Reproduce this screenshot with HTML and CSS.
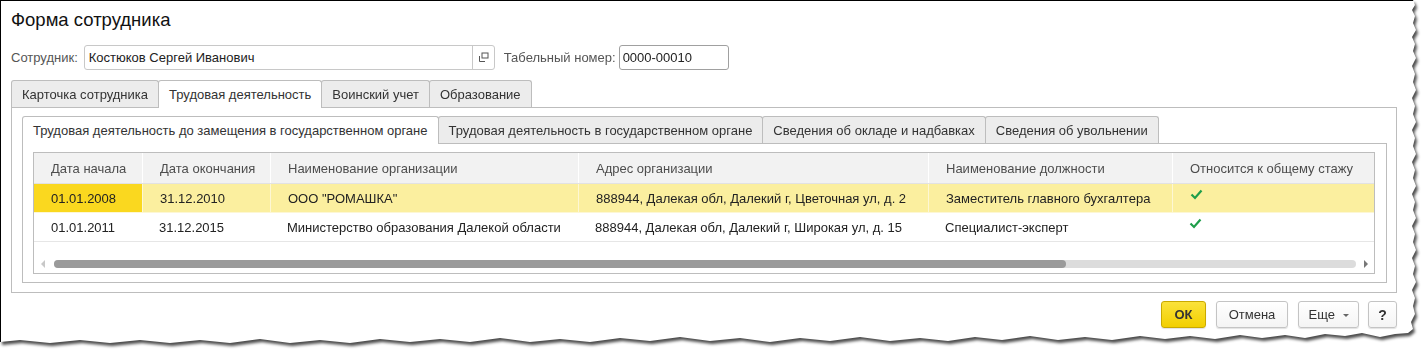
FILE: index.html
```html
<!DOCTYPE html>
<html lang="ru">
  <head>
    <meta charset="UTF-8" />
    <title>Форма сотрудника</title>
    <link rel="stylesheet" href="styles.css">
  </head>
  <body>
    <div class="sheet">
      <div class="paper">
        <h1 class="title">Форма сотрудника</h1>

        <div class="head-row">
          <span class="field-label">Сотрудник:</span>
          <div class="input input-employee">
            <span class="input-text">Костюков Сергей Иванович</span>
            <span class="input-btn">
              <svg width="11" height="11" viewBox="0 0 11 11">
                <rect x="4" y="1" width="6" height="5" fill="none" stroke="#555" stroke-width="1" />
                <path d="M1.5 4 V9.5 H7" fill="none" stroke="#555" stroke-width="1" />
              </svg>
            </span>
          </div>
          <span class="field-label label-number">Табельный номер:</span>
          <div class="input input-number">0000-00010</div>
        </div>

        <div class="form">
          <div class="tabs">
            <div class="tab">Карточка сотрудника</div>
            <div class="tab active">Трудовая деятельность</div>
            <div class="tab">Воинский учет</div>
            <div class="tab">Образование</div>
          </div>

          <div class="panel">
            <div class="tabs">
              <div class="tab active">Трудовая деятельность до замещения в государственном органе</div>
              <div class="tab">Трудовая деятельность в государственном органе</div>
              <div class="tab">Сведения об окладе и надбавках</div>
              <div class="tab">Сведения об увольнении</div>
            </div>

            <div class="subpanel">
              <div class="grid">
                <div class="grid-row grid-head">
                  <div class="cell">Дата начала</div>
                  <div class="cell">Дата окончания</div>
                  <div class="cell">Наименование организации</div>
                  <div class="cell">Адрес организации</div>
                  <div class="cell">Наименование должности</div>
                  <div class="cell">Относится к общему стажу</div>
                </div>

                <div class="grid-row selected">
                  <div class="cell current">01.01.2008</div>
                  <div class="cell">31.12.2010</div>
                  <div class="cell">ООО "РОМАШКА"</div>
                  <div class="cell">888944, Далекая обл, Далекий г, Цветочная ул, д. 2</div>
                  <div class="cell">Заместитель главного бухгалтера</div>
                  <div class="cell check-cell">
                    <svg width="13" height="11" viewBox="0 0 13 11">
                      <path d="M1.5 5.5 L5 9 L11.5 1.5" fill="none" stroke="#1e9e4a" stroke-width="2.2" />
                    </svg>
                  </div>
                </div>

                <div class="grid-row">
                  <div class="cell">01.01.2011</div>
                  <div class="cell">31.12.2015</div>
                  <div class="cell">Министерство образования Далекой области</div>
                  <div class="cell">888944, Далекая обл, Далекий г, Широкая ул, д. 15</div>
                  <div class="cell">Специалист-эксперт</div>
                  <div class="cell check-cell">
                    <svg width="13" height="11" viewBox="0 0 13 11">
                      <path d="M1.5 5.5 L5 9 L11.5 1.5" fill="none" stroke="#1e9e4a" stroke-width="2.2" />
                    </svg>
                  </div>
                </div>

                <div class="hscroll">
                  <span class="arrow arrow-left"></span>
                  <div class="track"><div class="thumb"></div></div>
                  <span class="arrow arrow-right"></span>
                </div>
              </div>
            </div>
          </div>

          <div class="buttons">
            <button class="btn btn-ok">ОК</button>
            <button class="btn btn-cancel">Отмена</button>
            <button class="btn btn-more">Еще <span class="caret"></span></button>
            <button class="btn btn-help">?</button>
          </div>
        </div>
      </div>
    </div>
  </body>
</html>
```

FILE: styles.css
```css
body {
  margin: 0;
  background: #fff;
  font-family: 'Liberation Sans', Arial, sans-serif;
  font-size: 13px;
  color: #333;
}

.sheet {
  width: 1423px;
  height: 353px;
  filter: drop-shadow(2px 3px 1.5px rgba(0, 0, 0, 0.7));
}

.paper {
  box-sizing: border-box;
  width: 1418px;
  height: 346px;
  background: #fff;
  border-top: 1px solid #000;
  border-left: 1px solid #000;
  padding: 8px 0 0 10px;
  clip-path: polygon(
    0 0, 1413px 0, 1415px 5px, 1412px 10px, 1415px 16px, 1413px 23px,
    1416px 30px, 1412px 37px, 1415px 44px, 1413px 51px, 1416px 58px,
    1412px 66px, 1415px 74px, 1413px 82px, 1416px 90px, 1412px 98px,
    1415px 106px, 1413px 114px, 1416px 122px, 1412px 130px, 1415px 138px,
    1413px 146px, 1416px 154px, 1412px 162px, 1415px 170px, 1413px 178px,
    1416px 186px, 1412px 194px, 1415px 202px, 1413px 210px, 1416px 218px,
    1412px 226px, 1415px 234px, 1413px 242px, 1416px 250px, 1412px 258px,
    1415px 266px, 1413px 274px, 1416px 282px, 1412px 290px, 1415px 298px,
    1413px 306px, 1415px 314px, 1411px 322px, 1413px 329px, 1408px 333px,
    1395px 334px, 1380px 337px, 1362px 333px, 1345px 336px, 1325px 334px,
    1305px 338px, 1285px 335px, 1262px 338px, 1240px 335px, 1215px 339px,
    1190px 336px, 1165px 339px, 1140px 336px, 1112px 340px, 1085px 337px,
    1058px 340px, 1030px 336px, 1002px 340px, 975px 337px, 948px 341px,
    920px 338px, 890px 341px, 860px 337px, 830px 341px, 800px 338px,
    770px 342px, 740px 338px, 710px 341px, 680px 337px, 650px 341px,
    620px 338px, 590px 342px, 560px 339px, 530px 342px, 500px 338px,
    470px 342px, 440px 339px, 410px 342px, 380px 339px, 350px 343px,
    320px 340px, 290px 343px, 260px 339px, 230px 343px, 200px 340px,
    170px 343px, 140px 340px, 110px 343px, 80px 340px, 50px 343px,
    20px 340px, 0 342px
  );
}

.title {
  margin: 0;
  font-size: 18.5px;
  font-weight: normal;
  line-height: 22px;
  color: #111;
}

/* header fields */

.head-row {
  display: flex;
  align-items: center;
  margin-top: 14px;
  height: 25px;
}

.field-label {
  color: #555;
  margin-right: 6px;
}

.label-number {
  margin-left: 9px;
  margin-right: 3px;
}

.input {
  box-sizing: border-box;
  height: 25px;
  border: 1px solid #c8c8c8;
  border-radius: 3px;
  background: #fff;
  color: #222;
  display: flex;
  align-items: center;
}

.input-employee {
  width: 411px;
}

.input-text {
  flex: 1;
  padding-left: 4px;
}

.input-btn {
  width: 21px;
  height: 100%;
  border-left: 1px solid #c8c8c8;
  display: flex;
  align-items: center;
  justify-content: center;
}

.input-number {
  width: 110px;
  padding-left: 3px;
  border-color: #a0a0a0;
}

/* tabs */

.form {
  width: 1386px;
  margin-top: 10px;
}

.tabs {
  display: flex;
  align-items: flex-end;
}

.tab {
  box-sizing: border-box;
  height: 27px;
  padding: 0 10px;
  display: flex;
  align-items: center;
  background: #ececec;
  border: 1px solid #bdbdbd;
  border-bottom: none;
  border-radius: 3px 3px 0 0;
  margin-right: -1px;
  color: #333;
  white-space: nowrap;
}

.tab.active {
  position: relative;
  z-index: 1;
  height: 28px;
  margin-bottom: -1px;
  background: #fff;
}

.panel {
  border: 1px solid #bdbdbd;
  padding: 8px 9px 9px 10px;
}

.subpanel {
  border: 1px solid #bdbdbd;
  padding: 8px 11px 8px 10px;
}

/* table */

.grid {
  box-sizing: border-box;
  height: 122px;
  border: 1px solid #bdbdbd;
}

.grid-row {
  display: grid;
  grid-template-columns: 108px 128px 308px 350px 244px 1fr;
  height: 29px;
  border-bottom: 1px solid #e6e6e6;
  box-sizing: border-box;
  color: #222;
}

.cell {
  display: flex;
  align-items: center;
  padding-left: 17px;
  white-space: nowrap;
  overflow: hidden;
}

.grid-head {
  height: 31px;
  background: #f2f2f2;
  color: #4d4d4d;
  border-bottom-color: #e2e2e2;
}

.grid-head .cell + .cell {
  border-left: 1px solid #fff;
}

.grid-row.selected {
  background: #fbef9f;
  border-bottom-color: #fdf7d4;
}

.grid-row.selected .cell + .cell {
  border-left: 1px solid #fdf7d4;
}

.grid-row .current {
  background: #fad81f;
}

.check-cell svg {
  margin-top: -8px;
}

.hscroll {
  display: flex;
  align-items: center;
  margin-top: 17px;
  height: 9px;
  padding: 0 6px 0 7px;
}

.arrow {
  width: 0;
  height: 0;
  border-top: 4px solid transparent;
  border-bottom: 4px solid transparent;
}

.arrow-left {
  border-right: 4px solid #c8c8c8;
  margin-right: 9px;
}

.arrow-right {
  border-left: 4px solid #777;
  margin-left: 8px;
}

.track {
  flex: 1;
  height: 8px;
  border-radius: 4px;
  background: #dcdcdc;
}

.thumb {
  width: 1012px;
  height: 8px;
  border-radius: 4px;
  background: #9a9a9a;
}

/* buttons */

.buttons {
  display: flex;
  justify-content: flex-end;
  margin-top: 8px;
}

.btn {
  box-sizing: border-box;
  height: 27px;
  margin-left: 10px;
  padding: 0;
  font-family: inherit;
  font-size: 13px;
  color: #333;
  border: 1px solid #c4c4c4;
  border-radius: 3px;
  background: linear-gradient(#fff, #f4f4f4);
  box-shadow: 0 1px 1px rgba(0, 0, 0, 0.12);
}

.btn-ok {
  width: 45px;
  margin-left: 0;
  font-weight: bold;
  background: linear-gradient(#fbe23a, #f2cf00);
  border-color: #c9a900;
}

.btn-cancel {
  width: 72px;
}

.btn-more {
  width: 61px;
}

.btn-help {
  width: 29px;
  margin-left: 9px;
  font-weight: bold;
  font-size: 14px;
}

.caret {
  display: inline-block;
  width: 0;
  height: 0;
  margin-left: 4px;
  vertical-align: middle;
  border-left: 3px solid transparent;
  border-right: 3px solid transparent;
  border-top: 3px solid #666;
}
```
